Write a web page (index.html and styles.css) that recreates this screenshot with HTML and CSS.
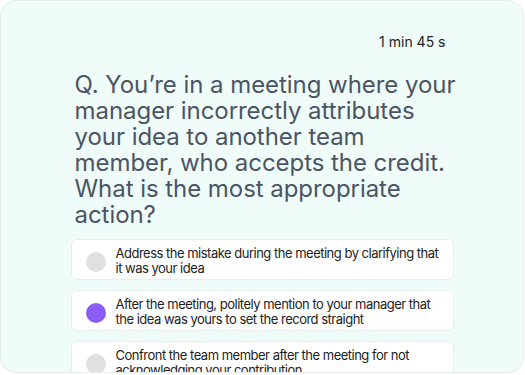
FILE: index.html
```html
<!DOCTYPE html>
<html>
<head>
<meta charset="utf-8">
<link rel="stylesheet" href="styles.css">
</head>
<body>
<div class="card">
  <div class="content">
    <div class="timer">1 min 45 s</div>
    <h1 class="question">Q. You’re in a meeting where your manager incorrectly attributes your idea to another team member, who accepts the credit. What is the most appropriate action?</h1>
    <ul class="options">
      <li class="option"><span class="radio"></span><span class="label">Address the mistake during the meeting by clarifying that it was your idea</span></li>
      <li class="option"><span class="radio selected"></span><span class="label">After the meeting, politely mention to your manager that the idea was yours to set the record straight</span></li>
      <li class="option"><span class="radio"></span><span class="label">Confront the team member after the meeting for not acknowledging your contribution</span></li>
    </ul>
  </div>
</div>
</body>
</html>
```

FILE: styles.css
```css
html, body {
  margin: 0;
  padding: 0;
  background: #ffffff;
}
body {
  font-family: Inter, "Noto Sans", sans-serif;
}
.card {
  box-sizing: border-box;
  width: 524px;
  height: 373px;
  background: #effcfa;
  border: 1px solid #e5eceb;
  border-radius: 16px;
  overflow: hidden;
}
.content {
  width: 383px;
  margin: 0 auto;
  padding-top: 32px;
}
.timer {
  text-align: right;
  font-size: 14px;
  line-height: 17px;
  color: #222222;
  padding-right: 8px;
}
.question {
  margin: 22px -7px 0 0;
  padding-left: 4px;
  font-size: 24px;
  line-height: 26px;
  font-weight: 400;
  letter-spacing: -0.05px;
  color: #4b5563;
}
.options {
  list-style: none;
  margin: 11px 0 0 0;
  padding: 0;
  display: flex;
  flex-direction: column;
  gap: 10px;
}
.option {
  box-sizing: border-box;
  min-height: 41px;
  background: #ffffff;
  border: 1px solid #e8eeee;
  border-radius: 6px;
  display: flex;
  align-items: center;
  gap: 10px;
  padding: 6px 10px 3px 14px;
}
.radio {
  flex: none;
  width: 20px;
  height: 20px;
  border-radius: 50%;
  background: #e0e0e0;
  margin-top: 1px;
}
.radio.selected {
  background: #8b5cf6;
}
.label {
  font-size: 13px;
  line-height: 15px;
  letter-spacing: -0.5px;
  color: #222222;
}
```
